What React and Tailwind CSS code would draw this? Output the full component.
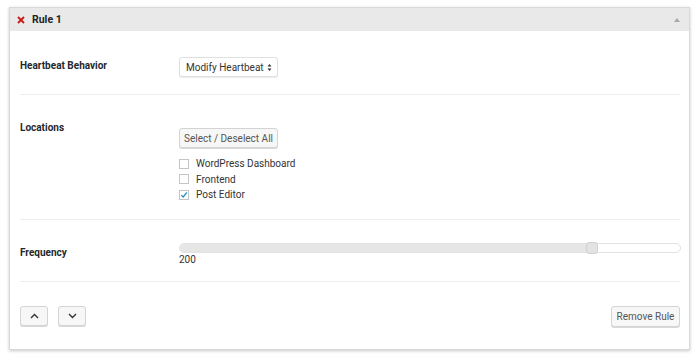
const Divider = () => <div className="ml-[10px] mr-[9px] h-px bg-[#eeeeee]" />;

const Check = ({ label, checked }) => (
  <label className="flex h-[15.5px] items-center gap-[7px]">
    <span className="flex h-[10px] w-[10px] items-center justify-center border border-[#c3c6c9] bg-white">
      {checked ? (
        <svg width="9" height="8" viewBox="0 0 9 8">
          <path d="M1.5 4.2 L3.5 6.3 L7.6 1.2" fill="none" stroke="#1e8cbe" strokeWidth="1.4" />
        </svg>
      ) : null}
    </span>
    <span>{label}</span>
  </label>
);

const SmallButton = ({ children, className = "" }) => (
  <button
    className={
      "flex shrink-0 items-center justify-center whitespace-nowrap rounded-[3px] border border-[#d4d4d4] bg-[#f7f7f7] text-[#555] shadow-[0_1px_0_#d8d8d8] " +
      className
    }
  >
    {children}
  </button>
);

const Label = ({ children, pt }) => (
  <div className={"w-[159px] shrink-0 text-[10px] font-bold leading-[16px] text-[#23282d] " + pt}>
    {children}
  </div>
);

export default function App() {
  return (
    <div className="h-[360px] w-[700px] whitespace-nowrap bg-white pl-[9px] pt-[7px] font-['Roboto','Liberation_Sans',sans-serif] text-[10px] text-[#333]">
      <div className="w-[681px] border border-[#d9d9d9] bg-white shadow-[0_1px_3px_rgba(0,0,0,0.22)]">
        <div className="flex h-[23px] items-center bg-[#e9e9e9] pl-[7px] pr-[9px]">
          <svg width="8" height="8" viewBox="0 0 8 8" className="mr-[7px]">
            <path d="M1 1 L7 7 M7 1 L1 7" stroke="#cc1818" strokeWidth="1.8" />
          </svg>
          <span className="text-[10.5px] font-bold text-[#222]">Rule 1</span>
          <svg width="6" height="4" viewBox="0 0 6 4" className="ml-auto">
            <path d="M0 4 L3 0 L6 4 Z" fill="#a8a8a8" />
          </svg>
        </div>

        <div className="flex pl-[10px] pr-[9px]">
          <Label pt="pt-[27px]">Heartbeat Behavior</Label>
          <div className="pb-[17px] pt-[26px]">
            <div className="flex h-[20px] w-[99px] items-center justify-between rounded-[3px] border border-[#e0e0e0] bg-white pl-[6px] pr-[5px] text-[#333] shadow-[0_1px_1px_rgba(0,0,0,0.08)]">
              <span>Modify Heartbeat</span>
              <svg width="5" height="9" viewBox="0 0 5 9">
                <path d="M0.5 3.5 L2.5 1 L4.5 3.5 Z M0.5 5.5 L2.5 8 L4.5 5.5 Z" fill="#333" />
              </svg>
            </div>
          </div>
        </div>
        <Divider />

        <div className="flex pl-[10px] pr-[9px]">
          <Label pt="pt-[25px]">Locations</Label>
          <div className="pb-[16px] pt-[33px]">
            <SmallButton className="h-[20px] w-[99px]">Select / Deselect All</SmallButton>
            <div className="mt-[8px] flex flex-col">
              <Check label="WordPress Dashboard" />
              <Check label="Frontend" />
              <Check label="Post Editor" checked />
            </div>
          </div>
        </div>
        <Divider />

        <div className="flex pl-[10px] pr-[9px]">
          <Label pt="pt-[25px]">Frequency</Label>
          <div className="flex-1 pb-[15px] pt-[23px]">
            <div className="relative h-[10px] w-[502px] rounded-full border border-[#e2e2e2] bg-white">
              <div className="h-full w-[412px] rounded-l-full bg-[#e6e6e6]" />
              <div className="absolute left-[406px] top-[-2px] h-[12px] w-[12px] rounded-[3px] border border-[#d2d2d2] bg-[#e3e3e3]" />
            </div>
            <div className="mt-[1px] leading-[12px]">200</div>
          </div>
        </div>
        <Divider />

        <div className="flex items-center pb-[22px] pl-[10px] pr-[9px] pt-[24px]">
          <SmallButton className="h-[20px] w-[28px]">
            <svg width="9" height="6" viewBox="0 0 9 6">
              <path d="M1 5 L4.5 1.5 L8 5" fill="none" stroke="#333" strokeWidth="1.4" />
            </svg>
          </SmallButton>
          <SmallButton className="ml-[10px] h-[20px] w-[28px]">
            <svg width="9" height="6" viewBox="0 0 9 6">
              <path d="M1 1 L4.5 4.5 L8 1" fill="none" stroke="#333" strokeWidth="1.4" />
            </svg>
          </SmallButton>
          <SmallButton className="ml-auto h-[21px] w-[69px]">Remove Rule</SmallButton>
        </div>
      </div>
    </div>
  );
}
